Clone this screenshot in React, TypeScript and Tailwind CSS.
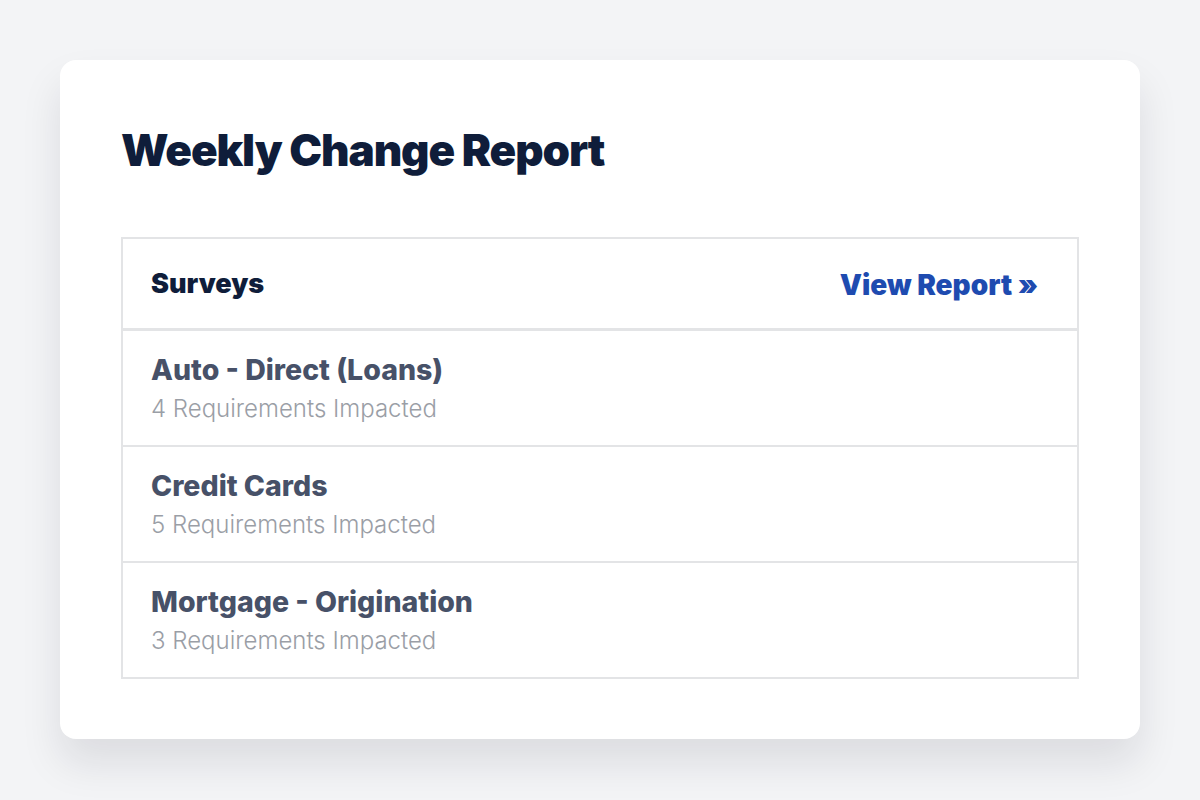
const surveys = [
  { name: 'Auto - Direct (Loans)', count: 4 },
  { name: 'Credit Cards', count: 5 },
  { name: 'Mortgage - Origination', count: 3 },
];

export default function App() {
  return (
    <div
      className="min-h-[800px] bg-[#f3f4f6] px-[60px] pt-[60px]"
      style={{ fontFamily: 'Inter, "Liberation Sans", sans-serif' }}
    >
      <div className="rounded-2xl bg-white px-[61px] pt-[60px] pb-[60px] shadow-[0_24px_40px_rgba(15,23,42,0.10)]">
        <h1 className="text-[44px] leading-[60px] font-black tracking-[-0.025em] text-[#0f1d3a]">
          Weekly Change Report
        </h1>

        <div className="mt-[57px] border-2 border-[#e3e4e6]">
          <div className="flex h-[92px] items-center justify-between border-b-[3px] border-[#e3e4e6] pt-[2px] pl-[28px] pr-[39px]">
            <span className="text-[27px] font-black text-[#0f1d3a]">Surveys</span>
            <a href="#" className="text-[28px] font-black text-[#1e4bb0]">
              View Report »
            </a>
          </div>

          {surveys.map((s, i) => (
            <div
              key={s.name}
              className={
                i < surveys.length - 1
                  ? 'flex h-[116px] flex-col justify-center border-b-2 border-[#e3e4e6] px-[28px]'
                  : 'flex h-[114px] flex-col justify-center px-[28px]'
              }
            >
              <div className="text-[28.5px] leading-[36px] font-extrabold text-[#475168]">{s.name}</div>
              <div className="mt-[6px] text-[24px] leading-[30px] font-light text-[#9a9ea6]">
                {s.count} Requirements Impacted
              </div>
            </div>
          ))}
        </div>
      </div>
    </div>
  );
}
